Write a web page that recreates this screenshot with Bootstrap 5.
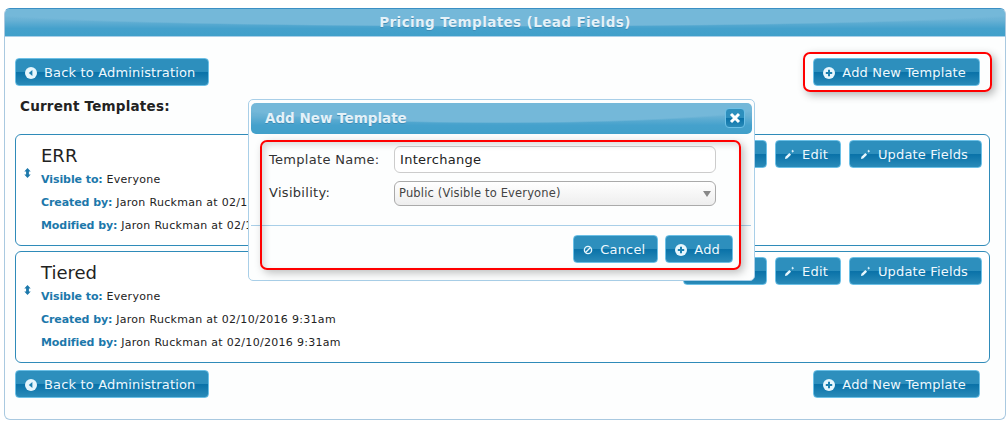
<!DOCTYPE html>
<html lang="en">
<head>
<meta charset="utf-8">
<title>Pricing Templates</title>
<link href="https://cdn.jsdelivr.net/npm/bootstrap@5.3.0/dist/css/bootstrap.min.css" rel="stylesheet">
<style>
html,body{height:428px;overflow:hidden}
body{background:#fff;font-family:"DejaVu Sans",Verdana,sans-serif;font-size:11px;color:#222;position:relative;padding:8px 2px 0 4px}
.sheet{height:412px;border:1px solid #a9c9e0;border-top-color:#3a8fc4;border-radius:6px;background:#fdfefe}
.glossbar{color:#e4f1f8;font-weight:700;font-size:13.5px;text-shadow:0 1px 0 #3d8cb5;background:radial-gradient(ellipse 58% 66% at 50% 0,#74b8d9 93%,rgba(116,184,217,0) 100%),linear-gradient(#74b8d9,#6ab2d5 40%,#45a1cc 72%,#41a0ca)}
.sheet>.glossbar{height:28px;line-height:27px;text-align:center;letter-spacing:.4px;border-radius:5px 5px 0 0;border-bottom:1px solid #a9cfe8}
.sheet-body{padding:21px 15px 0 10px}
.btn-line{padding-right:10px}
.gbtn{display:inline-flex;align-items:center;height:28px;padding:1px 12px 0 9px;color:#eef8fd;font-size:13px;letter-spacing:.16px;border:1px solid #6cc0e6;border-radius:4px;background:linear-gradient(#2d8fbd 0,#2d8fbd 48%,#0a72a8 52%,#2a8bb9 100%);white-space:nowrap;flex:none}
.gbtn svg{flex:none;margin-right:7px}
.gbtn-new{padding-right:13px}
.gbtn-copy{min-width:84px}
.gbtn-edit{padding-left:8px}
.gbtn-fields{padding-left:10px;padding-right:13px}
.gbtn-cancel{padding-left:8px}
.gbtn-cancel svg{margin-right:6px}
.cur-title{font-size:13.5px;font-weight:700;letter-spacing:.22px;color:#222;margin:10px 0 0 5px;height:38px;line-height:20px}
.tpl{height:112px;border:1px solid #2f8bb9;border-radius:6px;background:#fff;margin-bottom:5px;padding:0 7px 0 5px}
.tpl-move{width:20px;flex:none;padding:30px 0 0 3px}
.tpl h5{font-family:"DejaVu Sans",Verdana,sans-serif;font-size:18px;font-weight:400;color:#222;margin:9px 0 0;line-height:24px}
.tpl-row{line-height:16px;margin-top:7px;letter-spacing:.3px;white-space:nowrap}
h5+.tpl-row{margin-top:4px}
.tpl-row b{color:#1c78ab;letter-spacing:-.08px}
.tpl-actions{padding-top:5px;gap:8px}
.bottom-line{margin-top:7px}
.dlg{position:absolute;left:248px;top:99px;width:507px;height:182px;border:1px solid #a9cfe8;border-radius:5px;background:#fdfefe;z-index:5}
.dlg-head{margin:3px 2px 0 2px;height:31px;line-height:31px;padding-left:14px;border-radius:5px;display:flex;justify-content:space-between}
.dlg-x{width:20px;height:20px;margin:5px 7px 0 0;border:1px solid #6cc0e6;border-radius:4px;background:linear-gradient(#2d8fbd,#2d8fbd 48%,#0a72a8 52%,#2a8bb9);display:flex;align-items:center;justify-content:center}
.dlg-form{padding:12px 38px 0 20px}
.dlg-label{width:125px;flex:none;font-size:13px;letter-spacing:.3px;color:#333}
.dlg-label-up{margin-bottom:2px}
.dlg-name{margin-bottom:8px}
.dlg-input{display:block;width:322px;height:27px;border:1px solid #ccc;border-radius:6px;background:#fff;padding:0 5px;font-family:inherit;font-size:13px;letter-spacing:.3px;color:#222;line-height:25px}
.dlg-select{display:flex;align-items:center;justify-content:space-between;width:322px;height:25px;border:1px solid #aaa;border-radius:6px;background:linear-gradient(#fff,#eee);padding:0 4px 0 4px;font-size:11.5px;letter-spacing:.16px;color:#444}
.dlg-select i{width:0;height:0;border:4px solid transparent;border-top:6px solid #888;border-bottom:0}
.dlg-rule{border-top:1px solid #a9cfe8;margin:19px 3px 0 2px}
.dlg-foot{padding:9px 21px 0 0;gap:7px}
.redbox{position:absolute;border:2px solid #f00;border-radius:7px;box-shadow:3px 3px 8px rgba(0,0,0,.3);z-index:6;pointer-events:none}
.red-a{left:803px;top:52px;width:189px;height:40px}
.red-b{left:260px;top:140px;width:481px;height:130px;box-shadow:3px 3px 8px rgba(0,0,0,.25),inset 3px 3px 6px rgba(0,0,0,.14)}
</style>
</head>
<body>
<svg width="0" height="0" class="position-absolute">
<symbol id="i-back" viewBox="0 0 12 12"><circle cx="6" cy="6" r="6" fill="#e6f6fd"/><path d="M7.4 3v6L3.8 6z" fill="#1b80b0"/></symbol>
<symbol id="i-plus" viewBox="0 0 12 12"><circle cx="6" cy="6" r="6" fill="#e6f6fd"/><path d="M5 2.8h2V5h2.2v2H7v2.2H5V7H2.8V5H5z" fill="#1b80b0"/></symbol>
<symbol id="i-pen" viewBox="0 0 11 11"><path d="M1 10l.4-2.2 3.9-3.9 1.8 1.8L3.2 9.6zM8.6.6l.5 1 1 .5-.8.6-.6 1-.5-1-1-.6 1-.5z" fill="#e6f6fd"/></symbol>
<symbol id="i-no" viewBox="0 0 12 12"><circle cx="6" cy="6" r="3.6" fill="none" stroke="#e6f6fd" stroke-width="1.4"/><path d="M3.5 8.5l5-5" stroke="#e6f6fd" stroke-width="1.4"/></symbol>
<symbol id="i-move" viewBox="0 0 7 10"><path d="M3.5 0l3.2 3.4H4.9v3.2h1.8L3.5 10 .3 6.6h1.8V3.4H.3z" fill="#1c78ab"/></symbol>
</svg>
<div class="sheet">
  <div class="glossbar">Pricing Templates (Lead Fields)</div>
  <div class="sheet-body">
    <div class="d-flex justify-content-between btn-line">
      <span class="gbtn"><svg width="12" height="12"><use href="#i-back"/></svg>Back to Administration</span>
      <span class="gbtn gbtn-new"><svg width="12" height="12"><use href="#i-plus"/></svg>Add New Template</span>
    </div>
    <div class="cur-title">Current Templates:</div>
    <div class="tpl d-flex">
      <div class="tpl-move"><svg width="7" height="10"><use href="#i-move"/></svg></div>
      <div class="flex-grow-1">
        <h5>ERR</h5>
        <div class="tpl-row"><b>Visible to:</b> Everyone</div>
        <div class="tpl-row"><b>Created by:</b> Jaron Ruckman at 02/10/2016 9:31am</div>
        <div class="tpl-row"><b>Modified by:</b> Jaron Ruckman at 02/10/2016 9:31am</div>
      </div>
      <div class="tpl-actions d-flex align-items-start">
        <span class="gbtn gbtn-copy"><svg width="11" height="11"><use href="#i-plus"/></svg>Copy</span>
        <span class="gbtn gbtn-edit"><svg width="11" height="11"><use href="#i-pen"/></svg>Edit</span>
        <span class="gbtn gbtn-fields"><svg width="11" height="11"><use href="#i-pen"/></svg>Update Fields</span>
      </div>
    </div>
    <div class="tpl d-flex">
      <div class="tpl-move"><svg width="7" height="10"><use href="#i-move"/></svg></div>
      <div class="flex-grow-1">
        <h5>Tiered</h5>
        <div class="tpl-row"><b>Visible to:</b> Everyone</div>
        <div class="tpl-row"><b>Created by:</b> Jaron Ruckman at 02/10/2016 9:31am</div>
        <div class="tpl-row"><b>Modified by:</b> Jaron Ruckman at 02/10/2016 9:31am</div>
      </div>
      <div class="tpl-actions d-flex align-items-start">
        <span class="gbtn gbtn-copy"><svg width="11" height="11"><use href="#i-plus"/></svg>Copy</span>
        <span class="gbtn gbtn-edit"><svg width="11" height="11"><use href="#i-pen"/></svg>Edit</span>
        <span class="gbtn gbtn-fields"><svg width="11" height="11"><use href="#i-pen"/></svg>Update Fields</span>
      </div>
    </div>
    <div class="d-flex justify-content-between btn-line bottom-line">
      <span class="gbtn"><svg width="12" height="12"><use href="#i-back"/></svg>Back to Administration</span>
      <span class="gbtn gbtn-new"><svg width="12" height="12"><use href="#i-plus"/></svg>Add New Template</span>
    </div>
  </div>
</div>

<div class="dlg">
  <div class="glossbar dlg-head"><span>Add New Template</span><span class="dlg-x"><svg width="12" height="12" viewBox="0 0 12 12"><path d="M2 2l8 8M10 2l-8 8" stroke="#fff" stroke-width="3"/></svg></span></div>
  <div class="dlg-form">
    <div class="d-flex align-items-center dlg-name"><span class="dlg-label">Template Name:</span><span class="dlg-input">Interchange</span></div>
    <div class="d-flex align-items-center"><span class="dlg-label dlg-label-up">Visibility:</span><span class="dlg-select">Public (Visible to Everyone)<i></i></span></div>
  </div>
  <div class="dlg-rule"></div>
  <div class="dlg-foot d-flex justify-content-end">
    <span class="gbtn gbtn-cancel"><svg width="12" height="12"><use href="#i-no"/></svg>Cancel</span>
    <span class="gbtn"><svg width="12" height="12"><use href="#i-plus"/></svg>Add</span>
  </div>
</div>
<div class="redbox red-a"></div>
<div class="redbox red-b"></div>
<script src="https://cdn.jsdelivr.net/npm/bootstrap@5.3.0/dist/js/bootstrap.bundle.min.js"></script>
</body>
</html>
